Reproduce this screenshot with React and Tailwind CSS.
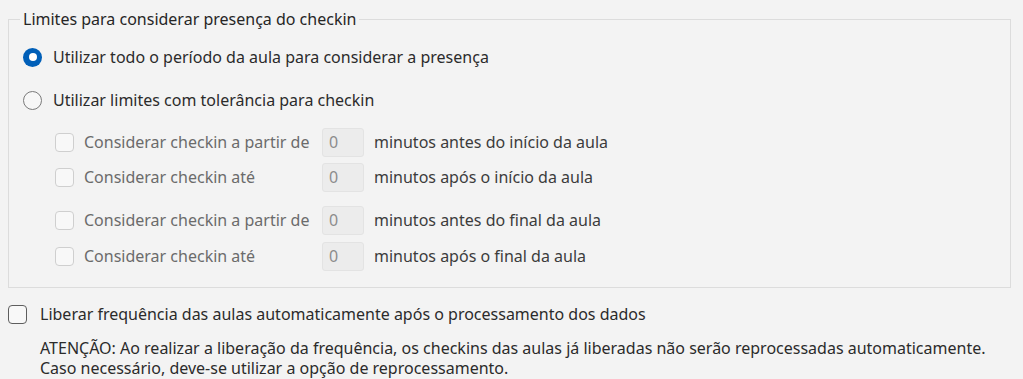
import React from 'react';

const font = { fontFamily: '"Noto Sans", "Open Sans", sans-serif' };

function Radio({ checked }) {
  if (checked) {
    return (
      <span className="flex h-[19px] w-[19px] shrink-0 items-center justify-center rounded-full bg-[#005fb8]">
        <span className="block h-[8px] w-[8px] rounded-full bg-white" />
      </span>
    );
  }
  return <span className="block h-[19px] w-[19px] shrink-0 rounded-full border-[1.5px] border-[#7a7a7a] bg-[#f7f7f7]" />;
}

function Check({ disabled }) {
  return (
    <span
      className={
        disabled
          ? 'block h-[19px] w-[19px] shrink-0 rounded-[4px] border border-[#cfcfcf] bg-[#f8f8f8]'
          : 'block h-[19px] w-[19px] shrink-0 rounded-[4px] border-[1.5px] border-[#5e5e5e] bg-[#f8f8f8]'
      }
    />
  );
}

function LimitRow({ label, after, className }) {
  return (
    <div className={'flex h-[30px] items-center ' + (className || '')}>
      <div className="ml-[46px]">
        <Check disabled />
      </div>
      <span className="ml-[10px] w-[238px] whitespace-nowrap text-[#6b6b6b]">{label}</span>
      <div className="flex h-[29px] w-[42px] shrink-0 items-center rounded-[3px] border border-[#e3e3e3] bg-[#ececec] pl-[6px] text-[#8c8c8c]">
        0
      </div>
      <span className="ml-[10px] text-[#3c3c3c]">{after}</span>
    </div>
  );
}

export default function App() {
  return (
    <div className="h-[379px] w-full overflow-hidden bg-[#f3f3f3] pt-[9px] text-[16px] leading-[20px] text-[#2b2b2b]" style={font}>
      <fieldset className="ml-[8px] w-[1003px] border border-[#dcdcdc] pb-[16px]">
        <legend className="ml-[11px] px-[3px] text-[#262626]">Limites para considerar presença do checkin</legend>
        <div className="mt-[18px] flex h-[20px] items-center">
          <div className="ml-[14px]">
            <Radio checked />
          </div>
          <span className="ml-[11px]">Utilizar todo o período da aula para considerar a presença</span>
        </div>
        <div className="mt-[23px] flex h-[20px] items-center">
          <div className="ml-[14px]">
            <Radio />
          </div>
          <span className="ml-[11px]">Utilizar limites com tolerância para checkin</span>
        </div>
        <LimitRow className="mt-[17px]" label="Considerar checkin a partir de" after="minutos antes do início da aula" />
        <LimitRow className="mt-[5px]" label="Considerar checkin até" after="minutos após o início da aula" />
        <LimitRow className="mt-[13px]" label="Considerar checkin a partir de" after="minutos antes do final da aula" />
        <LimitRow className="mt-[6px]" label="Considerar checkin até" after="minutos após o final da aula" />
      </fieldset>
      <div className="mt-[16px] flex h-[20px] items-center pl-[8px]">
        <Check />
        <span className="ml-[13px]">Liberar frequência das aulas automaticamente após o processamento dos dados</span>
      </div>
      <div className="mt-[14px] pl-[40px] leading-[20px]">
        <p className="whitespace-nowrap">ATENÇÃO: Ao realizar a liberação da frequência, os checkins das aulas já liberadas não serão reprocessadas automaticamente.</p>
        <p>Caso necessário, deve-se utilizar a opção de reprocessamento.</p>
      </div>
    </div>
  );
}
